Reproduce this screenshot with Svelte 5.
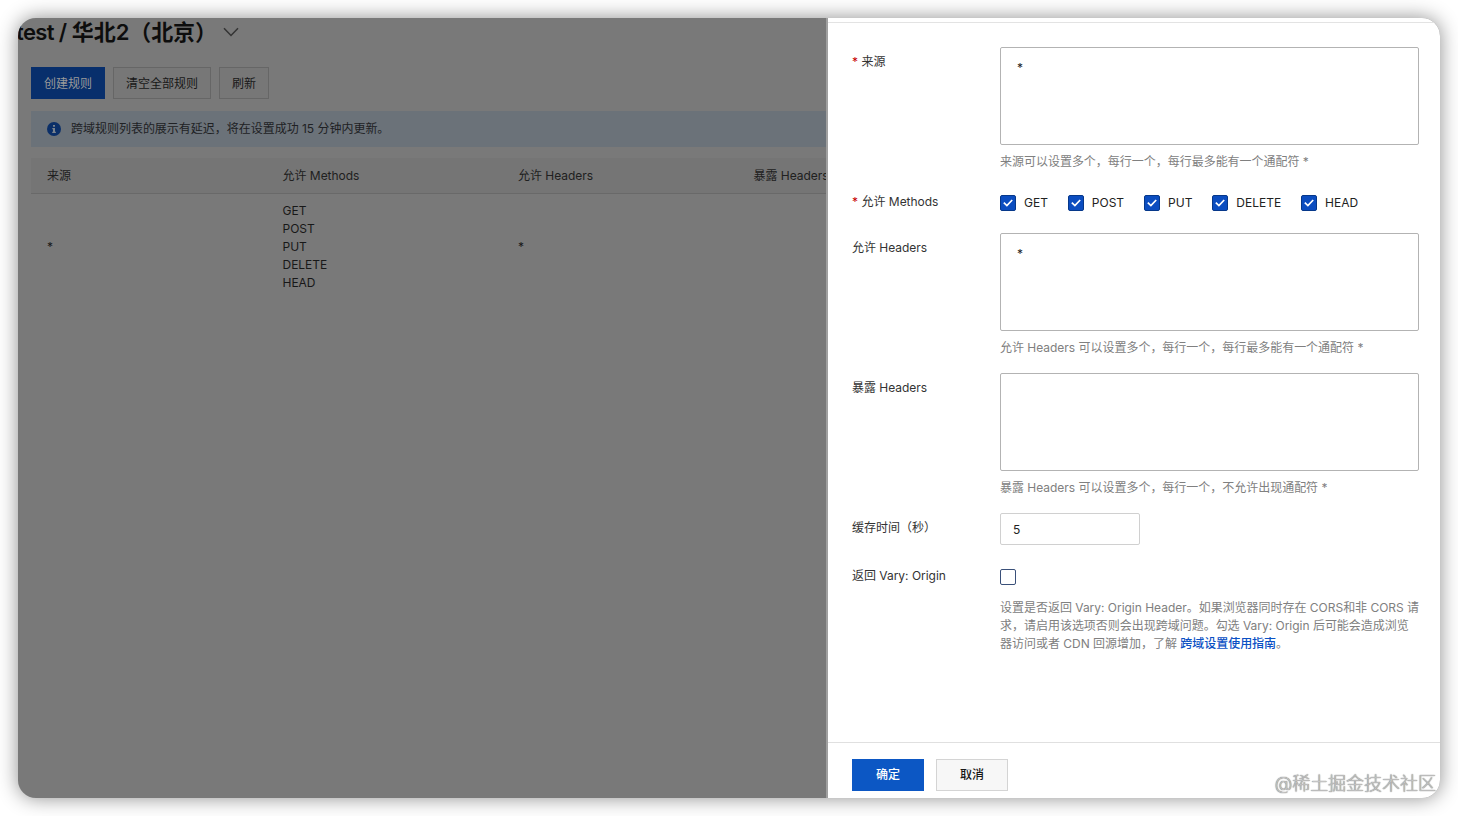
<script>
  // State
  let source = $state("*");
  let allowHeaders = $state("*");
  let exposeHeaders = $state("");
  let maxAge = $state("5");
  let vary = $state(false);
  let methods = $state([
    { name: "GET", checked: true },
    { name: "POST", checked: true },
    { name: "PUT", checked: true },
    { name: "DELETE", checked: true },
    { name: "HEAD", checked: true },
  ]);

  const columns = ["来源", "允许 Methods", "允许 Headers", "暴露 Headers"];
  const rules = [
    { origin: "*", methods: ["GET", "POST", "PUT", "DELETE", "HEAD"], headers: "*", expose: "" },
  ];
</script>

{#snippet box(checked, toggle, label)}
  <button class="box" class:checked role="checkbox" aria-checked={checked} aria-label={label} onclick={toggle}>
    {#if checked}
      <svg width="10" height="8" viewBox="0 0 10 8">
        <path d="M.8 3.6 3.9 6.5 9.2 1" fill="none" stroke="#fff" stroke-width="1.7" />
      </svg>
    {/if}
  </button>
{/snippet}

<div class="window">
  <main>
    <h1>
      <span><span class="bucket">test /</span> 华北2（北京）</span>
      <svg width="16" height="10" viewBox="0 0 16 10">
        <path d="M1 1.2 8 8.4 15 1.2" fill="none" stroke="#343434" stroke-width="1.5" />
      </svg>
    </h1>

    <div class="toolbar">
      <button class="dim primary">创建规则</button>
      <button class="dim">清空全部规则</button>
      <button class="dim">刷新</button>
    </div>

    <div class="notice">
      <svg width="14" height="14" viewBox="0 0 14 14">
        <circle cx="7" cy="7" r="7" fill="#0b2f68" />
        <path d="M6 3h2v1.8H6zM5.3 6H8v3.8h.9V11H5.2V9.8H6V7.2h-.7z" fill="#7a828c" />
      </svg>
      <span>跨域规则列表的展示有延迟，将在设置成功 15 分钟内更新。</span>
    </div>

    <div class="row head">
      {#each columns as column}
        <span>{column}</span>
      {/each}
    </div>
    {#each rules as rule}
      <div class="row">
        <span>{rule.origin}</span>
        <div>
          {#each rule.methods as method}
            <p>{method}</p>
          {/each}
        </div>
        <span>{rule.headers}</span>
        <span>{rule.expose}</span>
      </div>
    {/each}
  </main>

  <aside>
    <div class="form">
      <div class="item area">
        <div class="label"><i>*</i>来源</div>
        <div class="control">
          <textarea bind:value={source}></textarea>
          <p>来源可以设置多个，每行一个，每行最多能有一个通配符 *</p>
        </div>
      </div>

      <div class="item methods">
        <div class="label"><i>*</i>允许 Methods</div>
        <div class="control checks">
          {#each methods as method}
            <div class="check">
              {@render box(method.checked, () => (method.checked = !method.checked), method.name)}
              <span>{method.name}</span>
            </div>
          {/each}
        </div>
      </div>

      <div class="item area">
        <div class="label">允许 Headers</div>
        <div class="control">
          <textarea bind:value={allowHeaders}></textarea>
          <p>允许 Headers 可以设置多个，每行一个，每行最多能有一个通配符 *</p>
        </div>
      </div>

      <div class="item area">
        <div class="label">暴露 Headers</div>
        <div class="control">
          <textarea bind:value={exposeHeaders}></textarea>
          <p>暴露 Headers 可以设置多个，每行一个，不允许出现通配符 *</p>
        </div>
      </div>

      <div class="item age">
        <div class="label">缓存时间（秒）</div>
        <div class="control"><input bind:value={maxAge} /></div>
      </div>

      <div class="item vary">
        <div class="label">返回 Vary: Origin</div>
        <div class="control">
          {@render box(vary, () => (vary = !vary), "Vary: Origin")}
          <p>
            设置是否返回 Vary: Origin Header。如果浏览器同时存在 CORS和非 CORS 请<br />求，请启用该选项否则会出现跨域问题。勾选 Vary: Origin 后可能会造成浏览<br />器访问或者 CDN 回源增加，了解 <a href="#guide">跨域设置使用指南</a>。
          </p>
        </div>
      </div>
    </div>

    <footer>
      <button class="ok">确定</button>
      <button class="cancel">取消</button>
    </footer>
  </aside>

  <div class="watermark">@稀土掘金技术社区</div>
</div>

<style>
  :global(body) {
    background: #fff;
    overflow: hidden;
  }

  .window {
    position: relative;
    display: flex;
    width: 1422px;
    height: 780px;
    margin: 18px;
    overflow: hidden;
    border-radius: 18px;
    background: #797979;
    box-shadow: 0 0 20px rgba(0, 0, 0, 0.45);
    font: 12px/18px Inter, "Noto Sans CJK SC", sans-serif;
    letter-spacing: -0.02px;
    color: #181818;
  }

  button,
  textarea,
  input {
    box-sizing: border-box;
    margin: 0;
    font: inherit;
    color: inherit;
  }

  p {
    margin: 0;
  }

  /* Page under the mask */
  main {
    flex: none;
    width: 808px;
    overflow: hidden;
    border-right: 2px solid #a0a0a0;
  }

  h1 {
    display: flex;
    align-items: center;
    gap: 6px;
    height: 28px;
    margin: 0 0 21px -2px;
    font-size: 22px;
    line-height: 28px;
    font-weight: 600;
    letter-spacing: -0.1px;
    color: #0d0d0d;
    white-space: nowrap;
  }

  .bucket {
    letter-spacing: -0.65px;
  }

  .toolbar {
    display: flex;
    gap: 8px;
    margin-left: 13px;
  }

  .dim {
    height: 32px;
    padding: 1px 12px 0;
    border: 1px solid #666;
    background: #777;
    white-space: nowrap;
  }

  .dim.primary {
    border-color: #082f6c;
    background: #082f6c;
    color: #9a9a9a;
  }

  .notice {
    display: flex;
    align-items: center;
    gap: 10px;
    height: 36px;
    margin: 12px 0 11px 13px;
    padding-left: 16px;
    background: #6b7279;
    color: #202124;
  }

  .row {
    display: grid;
    grid-template-columns: repeat(4, 235.5px);
    align-items: center;
    margin-left: 13px;
    padding: 8px 0 8px 16px;
  }

  .row.head {
    box-sizing: border-box;
    height: 36px;
    padding: 0 0 0 16px;
    border-bottom: 1px solid #696969;
    background: #757575;
    color: #202020;
  }

  /* Drawer */
  aside {
    display: flex;
    flex: none;
    flex-direction: column;
    width: 612px;
    background: #fff;
  }

  .form {
    flex: 1;
    margin-top: 4px;
    padding: 24px 21px 0 24px;
    border-top: 1px solid #e3e3e3;
  }

  .item {
    display: flex;
  }

  .label {
    flex: none;
    width: 148px;
    padding-top: 6px;
    color: #333;
  }

  .label i {
    margin-right: 3.5px;
    font-style: normal;
    color: #c80000;
  }

  .control {
    flex: 1;
    min-width: 0;
  }

  .control p {
    color: #808080;
    white-space: nowrap;
  }

  .area {
    height: 140px;
  }

  textarea {
    display: block;
    width: 419px;
    height: 98px;
    margin-bottom: 8px;
    padding: 11px 16px;
    border: 1px solid #b3b3b3;
    border-radius: 2px;
    resize: none;
    outline: none;
    color: #222;
  }

  .methods {
    height: 46px;
  }

  .checks {
    display: flex;
    align-items: flex-start;
    gap: 20px;
    padding-top: 7px;
  }

  .check {
    display: flex;
    align-items: center;
    gap: 8px;
    color: #222;
  }

  .box {
    display: flex;
    align-items: center;
    justify-content: center;
    width: 16px;
    height: 16px;
    padding: 0;
    border: 1px solid #3a5079;
    border-radius: 2px;
    background: #fff;
  }

  .box.checked {
    border-color: #06388a;
    background: #0b4dc0;
  }

  .age {
    height: 48px;
  }

  input {
    width: 140px;
    height: 32px;
    padding: 0 12px;
    border: 1px solid #d0d0d0;
    border-radius: 2px;
    outline: none;
    color: #222;
  }

  .vary .box {
    margin: 8px 0 14px;
  }

  a {
    color: #0b50c4;
    font-weight: 500;
    text-decoration: none;
  }

  footer {
    box-sizing: border-box;
    display: flex;
    gap: 12px;
    height: 56px;
    padding: 16px 24px 0;
    border-top: 1px solid #e0e0e0;
  }

  footer button {
    width: 72px;
    height: 32px;
    padding: 0;
    border: 1px solid #d4d4d4;
    background: #f7f7f7;
    font-weight: 500;
  }

  footer .ok {
    border-color: #0c57c4;
    background: #0c57c4;
    color: #fff;
  }

  .watermark {
    position: absolute;
    right: 4px;
    bottom: 1px;
    font-size: 18px;
    line-height: 26px;
    font-weight: 300;
    color: #c4c4c4;
    text-shadow: 0 0 1px #777, 0 0 1px #999;
  }
</style>
